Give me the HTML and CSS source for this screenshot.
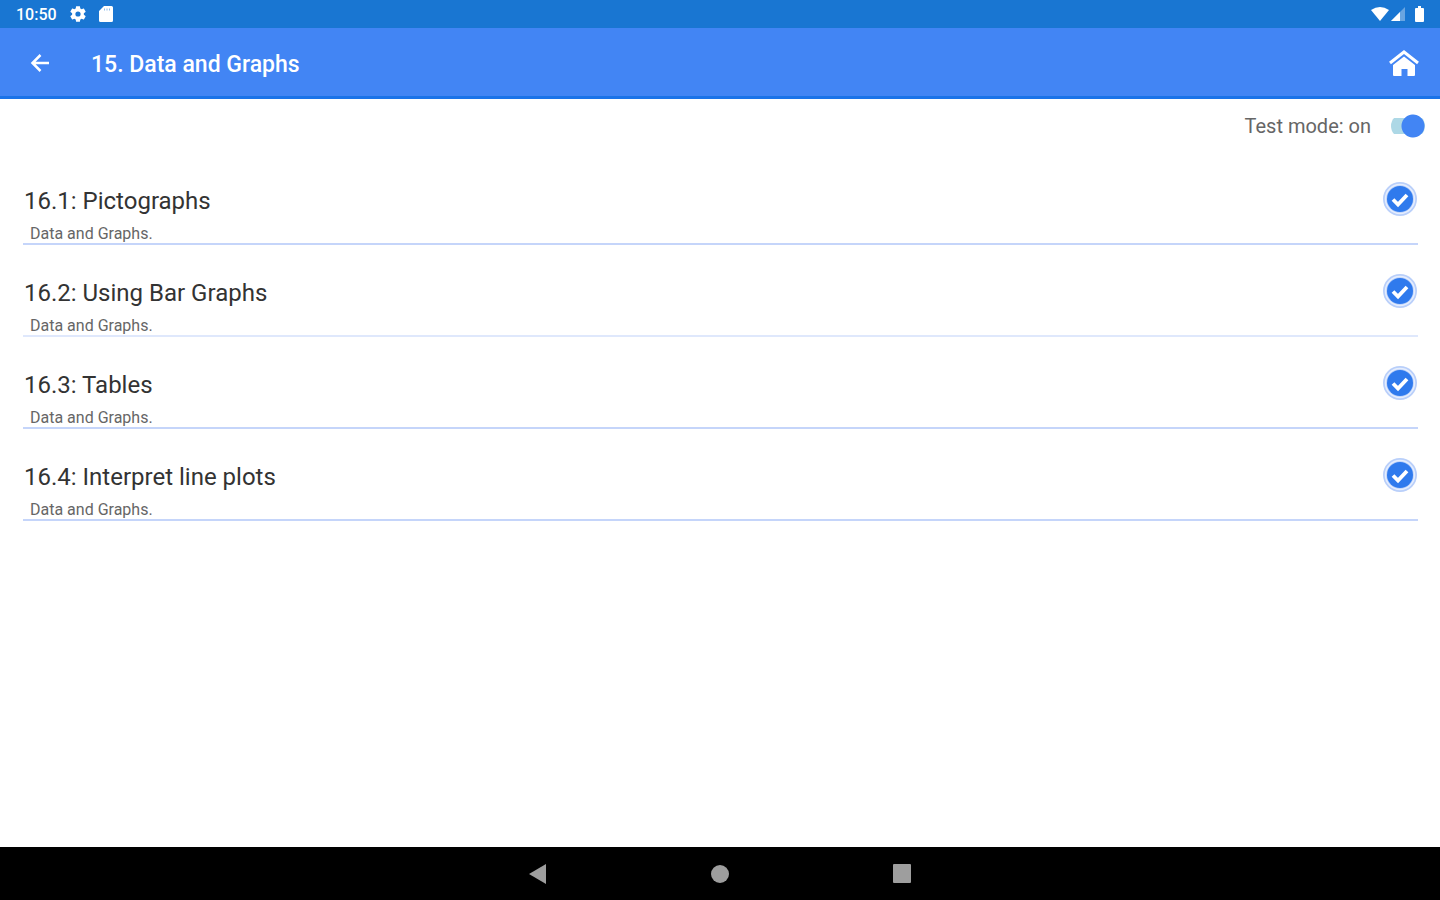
FILE: index.html
```html
<!DOCTYPE html>
<html lang="en">
<head>
  <meta charset="UTF-8">
  <meta name="viewport" content="width=device-width, initial-scale=1.0">
  <title>15. Data and Graphs</title>
  <link rel="stylesheet" href="styles.css">
</head>
<body>

  <svg class="sprite" aria-hidden="true">
    <symbol id="check" viewBox="0 0 36 36">
      <circle cx="18" cy="18" r="17" fill="#b9cffa"/>
      <circle cx="18" cy="18" r="14.500" fill="none" stroke="#e6eefd" stroke-width="1.500"/>
      <circle cx="18" cy="18" r="13" fill="#2f7aed"/>
      <path d="M11 18.500l5 5 9-9.500" fill="none" stroke="#fff" stroke-width="3.800"/>
    </symbol>
  </svg>

  <div class="status-bar">
    <div class="status-left">
      <span class="clock">10:50</span>
      <svg width="18" height="18" viewBox="1 1 22 22" fill="#fff"><path d="M19.14 12.94c.04-.3.06-.61.06-.94 0-.32-.02-.64-.07-.94l2.03-1.58c.18-.14.23-.41.12-.61l-1.92-3.32c-.12-.22-.37-.29-.59-.22l-2.39.96c-.5-.38-1.03-.7-1.62-.94l-.36-2.54c-.04-.24-.24-.41-.48-.41h-3.84c-.24 0-.43.17-.47.41l-.36 2.54c-.59.24-1.13.57-1.62.94l-2.39-.96c-.22-.08-.47 0-.59.22L2.74 8.87c-.12.21-.08.47.12.61l2.03 1.58c-.05.3-.09.63-.09.94s.02.64.07.94l-2.03 1.58c-.18.14-.23.41-.12.61l1.92 3.32c.12.22.37.29.59.22l2.39-.96c.5.38 1.03.7 1.62.94l.36 2.54c.05.24.24.41.48.41h3.84c.24 0 .44-.17.47-.41l.36-2.54c.59-.24 1.13-.56 1.62-.94l2.39.96c.22.08.47 0 .59-.22l1.92-3.32c.12-.22.07-.47-.12-.61l-2.01-1.58zM12 15.2a3.2 3.2 0 1 1 0-6.4 3.2 3.2 0 0 1 0 6.4z"/></svg>
      <svg width="14" height="16" viewBox="0 0 14 16" fill="#fff"><path d="M5 0h7.500a1.500 1.500 0 0 1 1.500 1.500v13a1.500 1.500 0 0 1-1.500 1.500h-11a1.500 1.500 0 0 1-1.500-1.500V5z"/><path d="M5.500 2.500v2M8 2.500v2M10.500 2.500v2" stroke="#8fbcea" stroke-width="1"/></svg>
    </div>
    <div class="status-right">
      <svg width="18" height="14" viewBox="0 0 18 14" fill="#fff"><path d="M0 3Q9-3 18 3L9 14z"/></svg>
      <svg width="14" height="14" viewBox="0 0 14 14" fill="#fff"><path d="M0 14L14 0v14z" opacity=".35"/><path d="M0 14L9 5v9z"/></svg>
      <svg class="battery" width="9" height="16" viewBox="0 0 9 16" fill="#fff"><path d="M3 0h3v2h2a1 1 0 0 1 1 1v12a1 1 0 0 1-1 1H1a1 1 0 0 1-1-1V3a1 1 0 0 1 1-1h2z"/></svg>
    </div>
  </div>

  <header class="app-bar">
    <button class="icon-button" type="button" aria-label="Back">
      <svg width="20" height="20" viewBox="0 0 20 20" fill="none" stroke="#fff" stroke-width="2.500"><path d="M19 10H3M10.500 2L2.500 10l8 8"/></svg>
    </button>
    <h1>15. Data and Graphs</h1>
    <button class="icon-button" type="button" aria-label="Home">
      <svg width="32" height="28" viewBox="0 0 32 28"><path d="M2 14L16 3l14 11" fill="none" stroke="#fff" stroke-width="3"/><path d="M16 7.500L27 16v10a1 1 0 0 1-1 1h-6.500v-7h-6v7H6a1 1 0 0 1-1-1V16z" fill="#fff"/></svg>
    </button>
  </header>

  <main>
    <div class="test-mode">
      <label for="testMode">Test mode: on</label>
      <input type="checkbox" id="testMode" class="switch" role="switch" checked>
    </div>

    <ul class="lessons">
      <li>
        <a class="lesson" href="#pictographs">
          <span class="lesson-text">
            <span class="lesson-title">16.1: Pictographs</span>
            <span class="lesson-note">Data and Graphs.</span>
          </span>
          <svg class="check"><use href="#check"/></svg>
        </a>
      </li>
      <li>
        <a class="lesson lesson-pale" href="#bar-graphs">
          <span class="lesson-text">
            <span class="lesson-title">16.2: Using Bar Graphs</span>
            <span class="lesson-note">Data and Graphs.</span>
          </span>
          <svg class="check"><use href="#check"/></svg>
        </a>
      </li>
      <li>
        <a class="lesson" href="#tables">
          <span class="lesson-text">
            <span class="lesson-title">16.3: Tables</span>
            <span class="lesson-note">Data and Graphs.</span>
          </span>
          <svg class="check"><use href="#check"/></svg>
        </a>
      </li>
      <li>
        <a class="lesson" href="#line-plots">
          <span class="lesson-text">
            <span class="lesson-title">16.4: Interpret line plots</span>
            <span class="lesson-note">Data and Graphs.</span>
          </span>
          <svg class="check"><use href="#check"/></svg>
        </a>
      </li>
    </ul>
  </main>

  <nav class="nav-bar">
    <button type="button" aria-label="Back">
      <svg width="20" height="20" viewBox="0 0 20 20" fill="#9e9e9e"><path d="M1 10L18 0v20z"/></svg>
    </button>
    <button type="button" aria-label="Home">
      <svg width="20" height="20" viewBox="0 0 20 20" fill="#9e9e9e"><circle cx="10" cy="10" r="9"/></svg>
    </button>
    <button type="button" aria-label="Recent apps">
      <svg width="20" height="20" viewBox="0 0 20 20" fill="#9e9e9e"><rect x="1" y="0" width="18" height="19" rx="1"/></svg>
    </button>
  </nav>

</body>
</html>
```
FILE: styles.css
```css
* {
  box-sizing: border-box;
}
body {
  margin: 0;
  min-height: 100vh;
  display: flex;
  flex-direction: column;
  font-family: Roboto, "Liberation Sans", sans-serif;
  background-color: #ffffff;
  color: #333;
}
svg {
  display: block;
  flex: none;
}
button {
  padding: 0;
  border: none;
  background: none;
  cursor: pointer;
}
.sprite {
  width: 0;
  height: 0;
  position: absolute;
}
.status-bar {
  display: flex;
  align-items: center;
  justify-content: space-between;
  height: 28px;
  padding: 0 16px;
  background-color: #1976d2;
  color: white;
}
.status-left {
  display: flex;
  align-items: center;
  gap: 12px;
}
.status-right {
  display: flex;
  align-items: center;
  gap: 2px;
}
.battery {
  margin-left: 8px;
}
.clock {
  font-size: 16px;
  font-weight: 500;
}
.app-bar {
  display: flex;
  align-items: center;
  height: 71px;
  padding: 2px 20px 0 24px;
  background-color: #4285f4;
  border-bottom: 3px solid #1a73e8;
  color: white;
}
.app-bar h1 {
  flex: 1;
  margin: 0;
  padding: 2px 0 0 35px;
  font-size: 23px;
  font-weight: 500;
}
.icon-button {
  min-width: 32px;
  display: flex;
  justify-content: center;
}
main {
  flex: 1;
}
.test-mode {
  display: flex;
  align-items: center;
  justify-content: flex-end;
  gap: 20px;
  height: 54px;
  padding-right: 15px;
  font-size: 20px;
  color: #666;
}
.switch {
  appearance: none;
  width: 34px;
  height: 24px;
  margin: 0;
  border-radius: 12px;
  background: radial-gradient(circle at 22px 12px, #4285f4 11px, transparent 12px),
    linear-gradient(#add8e6, #add8e6) center / 100% 16px no-repeat;
  cursor: pointer;
}
.lessons {
  list-style: none;
  margin: 0;
  padding: 0 22px 0 23px;
}
.lesson {
  display: flex;
  align-items: flex-start;
  justify-content: space-between;
  height: 92px;
  padding-top: 28px;
  border-bottom: 2px solid #c5d5fa;
  color: inherit;
  text-decoration: none;
}
.lesson-pale {
  border-bottom-color: #dfe8fc;
}
.lesson-text {
  display: flex;
  flex-direction: column;
  padding-left: 1px;
}
.lesson-title {
  font-size: 24px;
  line-height: 40px;
}
.lesson-note {
  padding-left: 6px;
  font-size: 16px;
  line-height: 26px;
  color: #666;
}
.check {
  width: 36px;
  height: 36px;
}
.nav-bar {
  display: flex;
  align-items: center;
  justify-content: center;
  gap: 162px;
  height: 53px;
  background-color: #000;
}
```
